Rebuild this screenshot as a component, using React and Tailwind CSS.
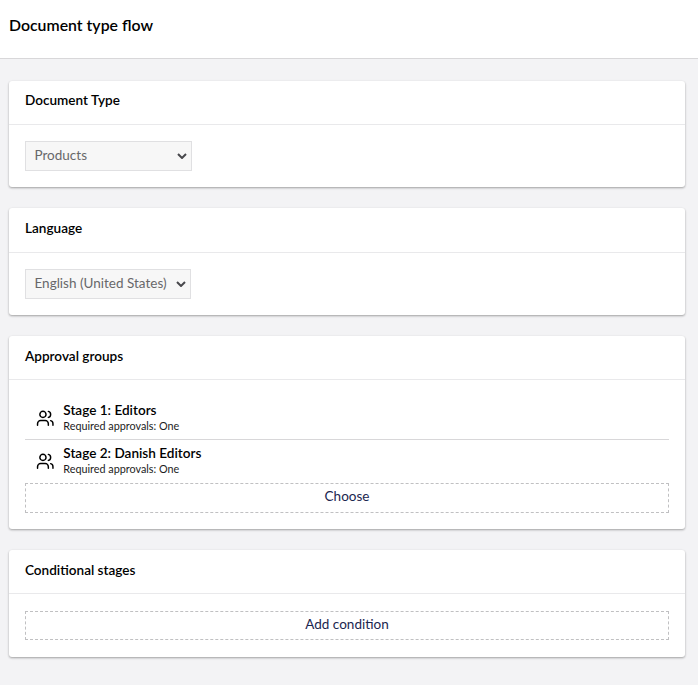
import { Users } from "lucide-react";

function Box({ title, className, headerClass = "h-[44px] pt-[10px]", children }) {
  return (
    <section
      className={`flex flex-col rounded-[3px] bg-white shadow-[0_1px_3px_rgba(0,0,0,0.12),0_1px_2px_rgba(0,0,0,0.24)] ${className}`}
    >
      <h2
        className={`shrink-0 border-b border-[#e9e9eb] px-4 text-[13.57px] leading-[20px] font-semibold ${headerClass}`}
      >
        {title}
      </h2>
      <div className="flex-1 px-4 pt-4">{children}</div>
    </section>
  );
}

function Select({ value, className }) {
  return (
    <div
      className={`flex h-[30px] items-center justify-between border border-[#e0e0e2] bg-[#f7f7f7] pr-1 pl-[8.5px] text-[#68686a] ${className}`}
    >
      <span className="pb-[2px] text-[13.5px] leading-[20px] whitespace-nowrap">{value}</span>
      <svg className="h-[6px] w-[10px]" viewBox="0 0 10 6" fill="none" stroke="#48484c" strokeWidth="2">
        <path d="M1 1l4 4 4-4" />
      </svg>
    </div>
  );
}

function Stage({ name, className }) {
  return (
    <div className={`flex items-center pl-[11px] ${className}`}>
      <Users className="h-[18.5px] w-[18.5px]" strokeWidth={1.9} />
      <div className="ml-[8.8px] pb-[2px]">
        <div className="text-[13.57px] leading-[17px] font-semibold">{name}</div>
        <div className="text-[10.8px] leading-[14px] text-[#1c1c1c]">Required approvals: One</div>
      </div>
    </div>
  );
}

function AddButton({ label, className }) {
  return (
    <button
      className={`block w-full border border-dashed border-[#c0c0c2] pb-[3px] text-center text-[13.5px] text-[#1b264f] ${className}`}
    >
      {label}
    </button>
  );
}

export default function App() {
  return (
    <div className="flex h-[685px] w-full flex-col bg-[#f3f3f5] font-['Lato',sans-serif] text-black">
      <header className="h-[59px] shrink-0 border-b border-[#d8d7d9] bg-white px-[9px] pt-[13px]">
        <h1 className="text-[15.85px] leading-[24px] font-semibold">Document type flow</h1>
      </header>
      <main className="flex flex-col pt-[22px] pr-[13px] pl-[9px]">
        <Box title="Document Type" className="h-[106px]" headerClass="h-[44px] pt-[9px]">
          <Select value="Products" className="w-[167px]" />
        </Box>
        <Box title="Language" className="mt-[21px] h-[107px]" headerClass="h-[45px] pt-[10px]">
          <Select value="English (United States)" className="w-[166px]" />
        </Box>
        <Box title="Approval groups" className="mt-[21px] h-[193px]">
          <Stage name="Stage 1: Editors" className="mt-[1px] h-[43px] border-b border-[#d8d7d9]" />
          <Stage name="Stage 2: Danish Editors" className="h-[43px] pb-[1px]" />
          <AddButton label="Choose" className="h-[30px]" />
        </Box>
        <Box title="Conditional stages" className="mt-[21px] h-[107px]">
          <AddButton label="Add condition" className="mt-px h-[29px]" />
        </Box>
      </main>
    </div>
  );
}
